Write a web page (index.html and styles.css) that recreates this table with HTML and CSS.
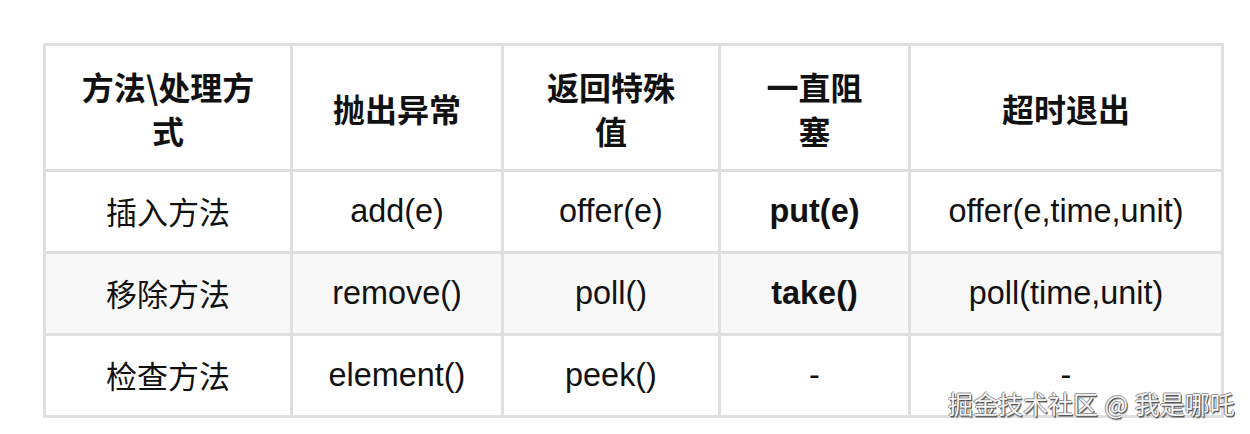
FILE: index.html
```html
<!DOCTYPE html>
<html lang="zh-CN">
<head>
<meta charset="utf-8">
<title>阻塞队列方法</title>
<link rel="stylesheet" href="styles.css">
</head>
<body>
<div class="page">
  <table class="grid">
    <colgroup>
      <col class="c1"><col class="c2"><col class="c3"><col class="c4"><col class="c5">
    </colgroup>
    <thead>
      <tr>
        <th>方法\处理方式</th>
        <th>抛出异常</th>
        <th>返回特殊值</th>
        <th>一直阻塞</th>
        <th>超时退出</th>
      </tr>
    </thead>
    <tbody>
      <tr>
        <td>插入方法</td>
        <td>add(e)</td>
        <td>offer(e)</td>
        <td><strong>put(e)</strong></td>
        <td>offer(e,time,unit)</td>
      </tr>
      <tr class="alt">
        <td>移除方法</td>
        <td>remove()</td>
        <td>poll()</td>
        <td><strong>take()</strong></td>
        <td>poll(time,unit)</td>
      </tr>
      <tr>
        <td>检查方法</td>
        <td>element()</td>
        <td>peek()</td>
        <td>-</td>
        <td>-</td>
      </tr>
    </tbody>
  </table>
  <div class="watermark">掘金技术社区 @ 我是哪吒</div>
</div>
</body>
</html>
```

FILE: styles.css
```css
html, body {
  margin: 0;
  padding: 0;
  background: #ffffff;
}

.page {
  position: relative;
  width: 1250px;
  height: 434px;
  padding: 43px 0 0 43px;
  box-sizing: border-box;
  font-family: "Liberation Sans", "Noto Sans CJK SC", sans-serif;
  color: #111111;
}

.grid {
  border-collapse: collapse;
  table-layout: fixed;
  width: 1178px;
  font-size: 32.4px;
}

.c1 { width: 247px; }
.c2 { width: 211px; }
.c3 { width: 217px; }
.c4 { width: 190px; }
.c5 { width: 313px; }

.grid th,
.grid td {
  border: 3px solid #dfdfdf;
  text-align: center;
  vertical-align: middle;
  padding: 0 34px;
}

.grid th {
  height: 123px;
  font-size: 32px;
  font-weight: 700;
  line-height: 44px;
  font-family: "Noto Sans CJK SC", "Liberation Sans", sans-serif;
}

.grid td {
  height: 77px;
  line-height: 40px;
  padding-bottom: 2px;
}

.grid td:first-child {
  font-family: "Noto Sans CJK SC", "Liberation Sans", sans-serif;
  font-size: 31px;
}

.grid tr.alt td {
  background: #f8f8f8;
}

.grid strong {
  font-weight: 700;
}

.watermark {
  position: absolute;
  left: 948px;
  top: 386px;
  font-family: "Noto Sans CJK SC", sans-serif;
  font-size: 25px;
  line-height: 34px;
  color: #f4f4f4;
  letter-spacing: 0;
  word-spacing: 1px;
  text-shadow: 1px 1px 0 #555, -1px 0 0 #888, 0 -1px 0 #999, 1px 2px 1px rgba(0,0,0,0.35);
}
```
